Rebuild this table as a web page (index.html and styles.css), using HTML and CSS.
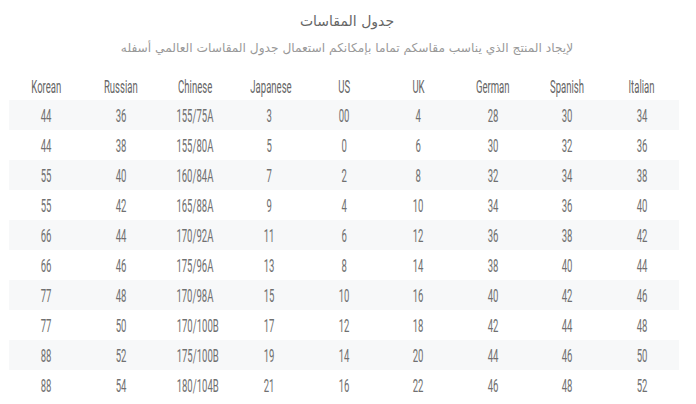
FILE: index.html
```html
<!DOCTYPE html>
<html lang="ar">
<head>
<meta charset="utf-8">
<title>جدول المقاسات</title>
<link rel="stylesheet" href="styles.css">
</head>
<body>
<div class="page">
  <header class="intro" dir="rtl">
    <h1 class="title">جدول المقاسات</h1>
    <p class="subtitle">لإيجاد المنتج الذي يناسب مقاسكم تماما بإمكانكم استعمال جدول المقاسات العالمي أسفله</p>
  </header>
  <table class="sizes">
    <thead>
      <tr><th><span>Korean</span></th><th><span>Russian</span></th><th><span>Chinese</span></th><th><span>Japanese</span></th><th><span>US</span></th><th><span>UK</span></th><th><span>German</span></th><th><span>Spanish</span></th><th><span>Italian</span></th></tr>
    </thead>
    <tbody>
      <tr><td><span>44</span></td><td><span>36</span></td><td><span>155/75A</span></td><td><span>3</span></td><td><span>00</span></td><td><span>4</span></td><td><span>28</span></td><td><span>30</span></td><td><span>34</span></td></tr>
      <tr><td><span>44</span></td><td><span>38</span></td><td><span>155/80A</span></td><td><span>5</span></td><td><span>0</span></td><td><span>6</span></td><td><span>30</span></td><td><span>32</span></td><td><span>36</span></td></tr>
      <tr><td><span>55</span></td><td><span>40</span></td><td><span>160/84A</span></td><td><span>7</span></td><td><span>2</span></td><td><span>8</span></td><td><span>32</span></td><td><span>34</span></td><td><span>38</span></td></tr>
      <tr><td><span>55</span></td><td><span>42</span></td><td><span>165/88A</span></td><td><span>9</span></td><td><span>4</span></td><td><span>10</span></td><td><span>34</span></td><td><span>36</span></td><td><span>40</span></td></tr>
      <tr><td><span>66</span></td><td><span>44</span></td><td><span>170/92A</span></td><td><span>11</span></td><td><span>6</span></td><td><span>12</span></td><td><span>36</span></td><td><span>38</span></td><td><span>42</span></td></tr>
      <tr><td><span>66</span></td><td><span>46</span></td><td><span>175/96A</span></td><td><span>13</span></td><td><span>8</span></td><td><span>14</span></td><td><span>38</span></td><td><span>40</span></td><td><span>44</span></td></tr>
      <tr><td><span>77</span></td><td><span>48</span></td><td><span>170/98A</span></td><td><span>15</span></td><td><span>10</span></td><td><span>16</span></td><td><span>40</span></td><td><span>42</span></td><td><span>46</span></td></tr>
      <tr><td><span>77</span></td><td><span>50</span></td><td><span>170/100B</span></td><td><span>17</span></td><td><span>12</span></td><td><span>18</span></td><td><span>42</span></td><td><span>44</span></td><td><span>48</span></td></tr>
      <tr><td><span>88</span></td><td><span>52</span></td><td><span>175/100B</span></td><td><span>19</span></td><td><span>14</span></td><td><span>20</span></td><td><span>44</span></td><td><span>46</span></td><td><span>50</span></td></tr>
      <tr><td><span>88</span></td><td><span>54</span></td><td><span>180/104B</span></td><td><span>21</span></td><td><span>16</span></td><td><span>22</span></td><td><span>46</span></td><td><span>48</span></td><td><span>52</span></td></tr>
    </tbody>
  </table>
</div>
</body>
</html>
```

FILE: styles.css
```css
html, body {
  margin: 0;
  padding: 0;
  background: #ffffff;
}

.page {
  width: 696px;
  padding: 0 17px 0 9px;
  box-sizing: border-box;
}

.intro {
  height: 70px;
  display: flex;
  flex-direction: column;
  align-items: center;
  font-family: "DejaVu Sans", sans-serif;
  padding-left: 6px;
}

.title {
  margin: 10px 0 0;
  font-size: 14px;
  font-weight: normal;
  line-height: 22px;
  color: #666666;
}

.subtitle {
  margin: 6px 0 0;
  font-size: 12.2px;
  font-weight: normal;
  line-height: 20px;
  color: #999999;
}

.sizes {
  width: 670px;
  border-collapse: collapse;
  table-layout: fixed;
  font-family: Roboto, "Liberation Sans", sans-serif;
  font-weight: 400;
  font-size: 18px;
  color: #707070;
}

.sizes th,
.sizes td {
  height: 30px;
  padding: 0;
  text-align: center;
  vertical-align: top;
  font-weight: 400;
}

.sizes th {
  color: #666666;
}

.sizes span {
  display: inline-block;
  transform: scaleX(0.53);
  line-height: 29px;
  padding-top: 1px;
}

.sizes th span {
  line-height: 27px;
  padding-top: 3px;
}

.sizes tbody tr:nth-child(odd) {
  background: #f7f8f9;
}
```
